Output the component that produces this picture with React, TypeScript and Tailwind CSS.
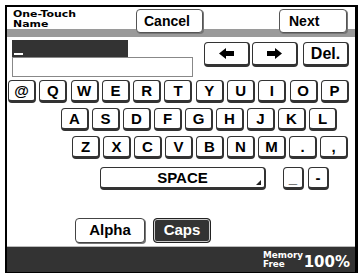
import React from 'react'

const row1 = ['@', 'Q', 'W', 'E', 'R', 'T', 'Y', 'U', 'I', 'O', 'P']
const row2 = ['A', 'S', 'D', 'F', 'G', 'H', 'J', 'K', 'L']
const row3 = ['Z', 'X', 'C', 'V', 'B', 'N', 'M', '.', ',']

const keyCls =
  'flex items-center justify-center bg-white border border-[#333] border-b-[3px] border-r-2 rounded-[4px] text-[15px] font-bold text-black leading-none'

function Key({ label, w = 'w-[28px]' }: { label: string; w?: string }) {
  return <div className={`${keyCls} ${w} h-[23px]`}>{label}</div>
}

function Arrow({ dir }: { dir: 'left' | 'right' }) {
  return (
    <svg width="15" height="11" viewBox="0 0 15 11" className={dir === 'right' ? 'rotate-180' : ''}>
      <polygon points="0,5.5 7,0 7,3 15,3 15,8 7,8 7,11" fill="#000" />
    </svg>
  )
}

export default function App() {
  return (
    <div className="w-[362px] h-[275px] bg-white pl-[5px] pt-[5px] font-['Liberation_Sans',Arial,sans-serif]">
      <div className="w-[353px] h-[268px] border-l-2 border-t-2 border-r-[3px] border-b border-black flex flex-col">
        {/* header */}
        <div className="h-[30px] flex items-start bg-[linear-gradient(to_bottom,#fff_22px,#9a9a9a_22px)]">
          <div className="w-[129px] pl-[6px] pt-[2px] font-['DejaVu_Sans',Verdana,sans-serif] font-bold text-[9.5px] text-black">
            <div className="origin-left scale-x-[1.15] h-[10px] leading-[10px]">One-Touch</div>
            <div className="origin-left scale-x-[1.15] h-[10px] leading-[10px]">Name</div>
          </div>
          <button className="mt-[2px] w-[67px] h-[24px] bg-white border border-[#555] rounded-[4px] shadow-[1px_1px_0_#777] flex items-center pl-[7px] text-[14px] font-bold">
            Cancel
          </button>
          <button className="ml-auto mr-[8px] mt-[2px] w-[68px] h-[24px] bg-white border border-[#555] rounded-[4px] shadow-[1px_1px_0_#777] flex items-center pl-[9px] text-[14px] font-bold">
            Next
          </button>
        </div>

        {/* input + cursor buttons */}
        <div className="mt-[3px] flex items-start">
          <div className="ml-[5px] flex flex-col">
            <div className="w-[116px] h-[17px] bg-[#333] flex items-end pl-[2px] pb-[2px]">
              <div className="w-[9px] h-[2px] bg-white" />
            </div>
            <div className="w-[181px] h-[20px] border border-[#888] bg-white" />
          </div>
          <div className="ml-[11px] mt-[2px] flex">
            <div className={`${keyCls} w-[46px] h-[25px]`}>
              <Arrow dir="left" />
            </div>
            <div className={`${keyCls} ml-[2px] w-[46px] h-[25px]`}>
              <Arrow dir="right" />
            </div>
            <div className={`${keyCls} ml-[5px] w-[46px] h-[25px] text-[16px]`}>Del.</div>
          </div>
        </div>

        {/* keyboard */}
        <div className="mt-[3px] ml-[1px] flex gap-[3.3px]">
          {row1.map((k) => (
            <Key key={k} label={k} />
          ))}
        </div>
        <div className="mt-[5px] ml-[54px] flex gap-[3px]">
          {row2.map((k) => (
            <Key key={k} label={k} />
          ))}
        </div>
        <div className="mt-[5px] ml-[65px] flex gap-[3px]">
          {row3.map((k) => (
            <Key key={k} label={k} />
          ))}
        </div>
        <div className="mt-[8px] flex items-start">
          <div className={`${keyCls} relative ml-[93px] w-[166px] h-[23px] text-[11px] font-['Liberation_Sans_Narrow','Liberation_Sans',sans-serif]`}>
            SPACE
            <svg width="5" height="5" viewBox="0 0 5 5" className="absolute right-[3px] bottom-[2px]">
              <polygon points="5,0 5,5 0,5" fill="#222" />
            </svg>
          </div>
          <Key label="_" w="ml-[17px] w-[21px]" />
          <Key label="-" w="ml-[4px] w-[21px]" />
        </div>

        {/* mode buttons */}
        <div className="mt-[28px] flex">
          <button className="ml-[68px] w-[70px] h-[25px] bg-white border border-[#444] rounded-[4px] shadow-[1px_1px_0_#777] text-[15px] font-bold">
            Alpha
          </button>
          <button className="ml-[8px] w-[58px] h-[25px] bg-[#333] border border-[#222] rounded-[4px] shadow-[inset_0_0_0_1px_#ccc] text-white text-[15px] font-bold">
            Caps
          </button>
        </div>

        {/* status bar */}
        <div className="mt-auto h-[26px] bg-[#333] border-t border-[#bbb] flex items-center justify-end pr-[5px]">
          <div className="font-['DejaVu_Sans',Verdana,sans-serif] font-bold text-[8px] text-white">
            <div className="h-[9px] leading-[9px] origin-left scale-x-[1.1]">Memory</div>
            <div className="h-[9px] leading-[9px] origin-left scale-x-[1.1]">Free</div>
          </div>
          <div className="mt-[5px] ml-[4px] font-['DejaVu_Sans',Verdana,sans-serif] text-[15px] font-bold text-white leading-none">
            100%
          </div>
        </div>
      </div>
    </div>
  )
}
